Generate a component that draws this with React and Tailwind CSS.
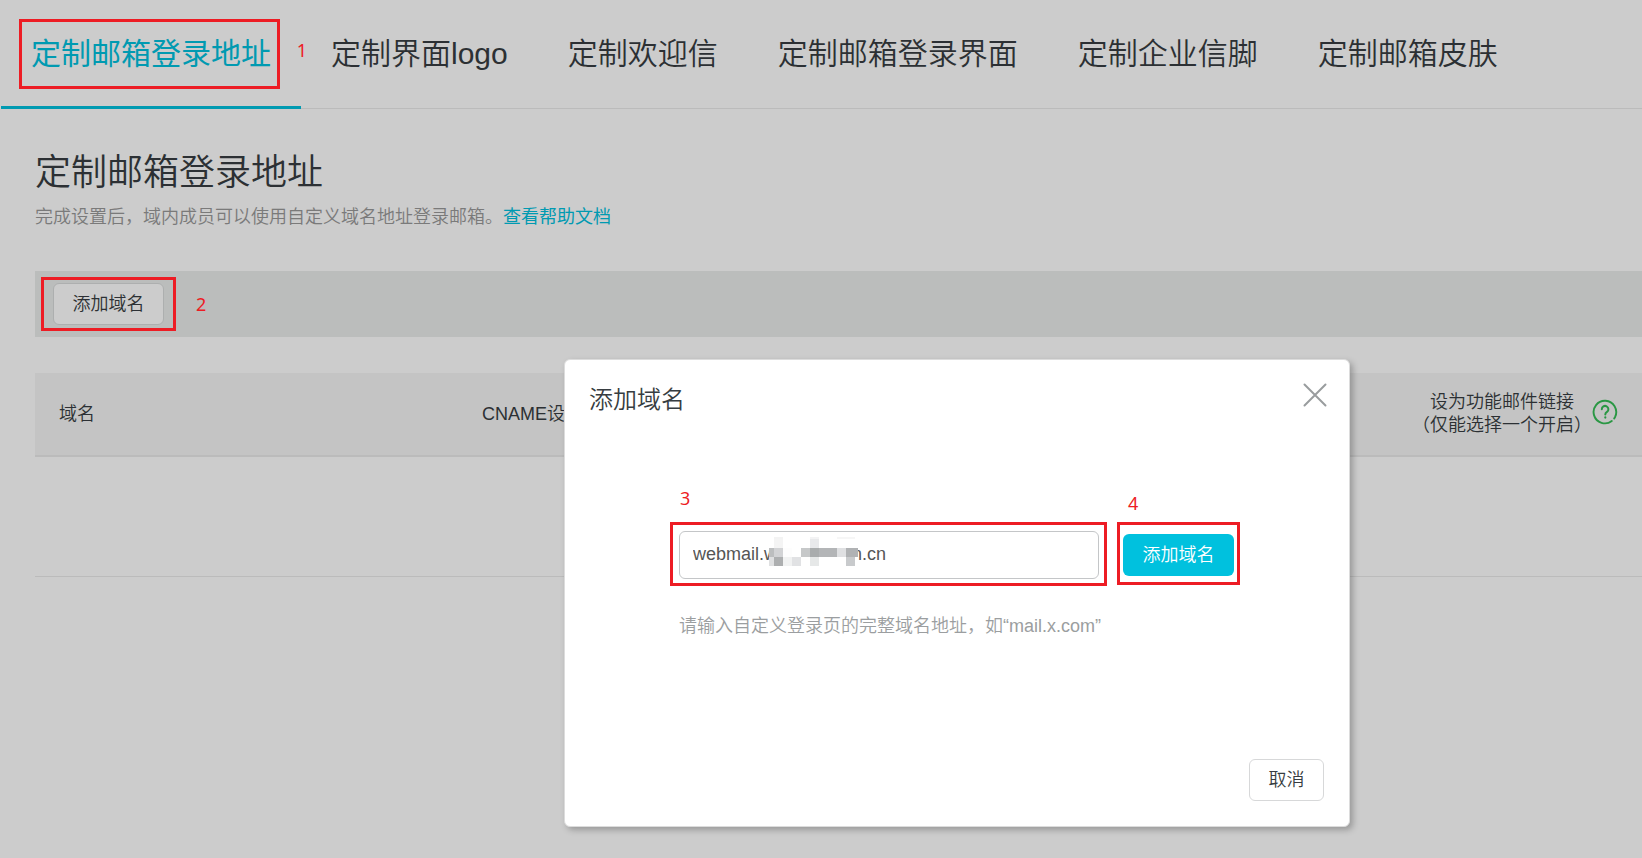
const TABS = ["定制邮箱登录地址", "定制界面logo", "定制欢迎信", "定制邮箱登录界面", "定制企业信脚", "定制邮箱皮肤"];

const MOSAIC = [
  [5, 0, 9, 2, "#f3f3f3"], [41, 0, 9, 2, "#f3f3f4"], [68, 0, 18, 2, "#f6f6f6"],
  [5, 2, 9, 9, "#f4f4f4"], [41, 2, 9, 9, "#e8e9eb"],
  [0, 11, 5, 9, "#bcbebf"], [5, 11, 9, 9, "#d2d3d5"], [14, 11, 9, 9, "#fdfdfd"],
  [32, 11, 9, 9, "#c6c8c9"], [41, 11, 9, 9, "#a9acad"], [50, 11, 18, 9, "#b3b5b7"],
  [68, 11, 9, 9, "#dfe0e2"], [77, 11, 12, 9, "#b0b2b4"],
  [0, 20, 5, 9, "#dfe0e1"], [5, 20, 9, 9, "#adafb0"], [14, 20, 9, 9, "#f1f2f2"],
  [23, 20, 9, 9, "#e1e2e4"], [41, 20, 9, 9, "#e6e8e8"], [77, 20, 9, 9, "#c8cacc"],
];

function Frame({ className }) {
  return <span aria-hidden="true" className={`pointer-events-none absolute z-20 border-3 border-[#ed1c24] ${className}`} />;
}

function Step({ n, className }) {
  return (
    <span className={`absolute z-20 font-['Noto_Sans',sans-serif] text-lg leading-6 font-normal text-[#ed1c24] ${className}`}>{n}</span>
  );
}

function Mosaic() {
  return (
    <svg aria-hidden="true" width="89" height="29" shapeRendering="crispEdges" className="pointer-events-none absolute top-[6px] left-[90px]">
      <rect width="89" height="29" fill="#fff" />
      {MOSAIC.map(([x, y, w, h, c], i) => (
        <rect key={i} x={x} y={y} width={w} height={h} fill={c} />
      ))}
    </svg>
  );
}

function HelpIcon() {
  return (
    <svg viewBox="0 0 26 26" className="size-[26px]" fill="none" stroke="#35bd55" strokeWidth="1.9" strokeLinecap="round" aria-hidden="true">
      <path d="M19.800 22A11.300 11.300 0 1 1 23.200 17.700L22.200 19.400" />
      <path d="M9.800 10.200a3.300 3.300 0 1 1 5.200 2.700c-1.300.9-1.700 1.400-1.700 2.500" strokeWidth="2" />
      <path d="M13.300 18.300v.3" strokeWidth="2.200" />
    </svg>
  );
}

function AddDomainDialog() {
  return (
    <div className="absolute inset-0 z-10 bg-black/20 pt-[359px] pl-[564px]">
      <section
        role="dialog"
        aria-labelledby="dialog-title"
        className="flex w-[786px] flex-col rounded-md border border-[#dcdcdc] bg-white py-[25px] pr-[25px] pl-6 shadow-[3px_3px_6px_rgba(0,0,0,0.25)]"
      >
        <header className="flex h-[33px] items-start justify-between">
          <h2 id="dialog-title" className="text-2xl leading-[30px] text-[#373d41]">添加域名</h2>
          <button type="button" aria-label="关闭" className="-mt-0.5 -mr-[3px]">
            <svg viewBox="0 0 24 24" className="size-6" stroke="#999c9e" strokeWidth="2" strokeLinecap="round" aria-hidden="true">
              <path d="M1.500 1.500l21 21M22.500 1.500l-21 21" />
            </svg>
          </button>
        </header>

        <div className="mt-[113px] flex items-center gap-6 pl-[90px]">
          <div className="relative">
            <input
              aria-label="域名地址"
              aria-describedby="domain-hint"
              defaultValue="webmail.w               n.cn"
              className="h-12 w-[420px] rounded-md border border-[#c4c6c8] px-[13px] pb-0.5 text-lg text-[#555]"
            />
            <Mosaic />
            <Frame className="-top-[9px] -right-2 -bottom-[7px] -left-[9px]" />
            <Step n="3" className="-top-[45px] left-px" />
          </div>
          <div className="relative">
            <button type="button" className="h-[42px] w-[111px] rounded-md bg-[#00c1de] text-lg text-white">添加域名</button>
            <Frame className="-inset-x-[6px] -top-3 -bottom-[9px]" />
            <Step n="4" className="-top-[43px] left-[5px]" />
          </div>
        </div>
        <p id="domain-hint" className="mt-[35px] pl-[90px] text-lg leading-6 text-[#9b9ea0]">
          请输入自定义登录页的完整域名地址，如“mail.x.com”
        </p>

        <footer className="mt-[121px] flex justify-end">
          <button type="button" className="h-[42px] w-[75px] rounded-md border border-[#d7d8d9] text-lg text-[#373d41]">取消</button>
        </footer>
      </section>
    </div>
  );
}

export default function App() {
  return (
    <div className="relative min-h-screen overflow-hidden bg-white font-['Liberation_Sans','Noto_Sans_CJK_SC',sans-serif] font-[350] text-[#373d41]">
      <nav className="ml-px flex h-[109px] border-b border-[#eaeaea]">
        {TABS.map((tab, i) => (
          <a
            key={tab}
            href="#"
            className={
              i === 0
                ? "relative -mb-px flex items-center border-b-3 border-[#00c1de] px-[30px] pt-0.5 text-3xl font-normal whitespace-nowrap text-[#00c1de]"
                : "flex items-center px-[30px] text-3xl whitespace-nowrap"
            }
          >
            {tab}
            {i === 0 && <Frame className="top-[19px] right-[21px] bottom-[17px] left-[18px]" />}
            {i === 0 && <Step n="1" className="top-[38px] right-[-6px]" />}
          </a>
        ))}
      </nav>

      <main className="pt-10 pl-[35px]">
        <h1 className="text-4xl leading-12">定制邮箱登录地址</h1>
        <p className="mt-1.5 text-lg leading-7 text-[#999]">
          完成设置后，域内成员可以使用自定义域名地址登录邮箱。
          <a href="#" className="font-normal text-[#00c1de]">查看帮助文档</a>
        </p>

        <div className="mt-10 flex h-[66px] items-center bg-[#eaedec] pl-[18px]">
          <div className="relative">
            <button type="button" className="h-[42px] w-[111px] rounded-md border border-[#d9dbdb] bg-white text-lg">添加域名</button>
            <Frame className="-inset-x-3 -inset-y-[6px]" />
            <Step n="2" className="top-[9px] left-[143px]" />
          </div>
        </div>

        <table className="mt-9 w-full table-fixed text-lg">
          <thead>
            <tr className="h-[83px] border-b-2 border-[#eaeaea] bg-[#f5f5f5] text-left">
              <th className="w-[423px] pl-6 font-[350]">域名</th>
              <th className="pl-6 font-[350]">CNAME设置</th>
              <th className="w-[254px] pr-6 font-[350]">
                <div className="flex items-center justify-end">
                  <span className="text-center leading-[23px] whitespace-nowrap">
                    设为功能邮件链接
                    <br />
                    （仅能选择一个开启）
                  </span>
                  <button type="button" aria-label="帮助" className="pb-1"><HelpIcon /></button>
                </div>
              </th>
            </tr>
          </thead>
          <tbody>
            <tr className="h-[120px] border-b border-[#eaeaea]">
              <td colSpan={3} />
            </tr>
          </tbody>
        </table>
      </main>

      <AddDomainDialog />
    </div>
  );
}
